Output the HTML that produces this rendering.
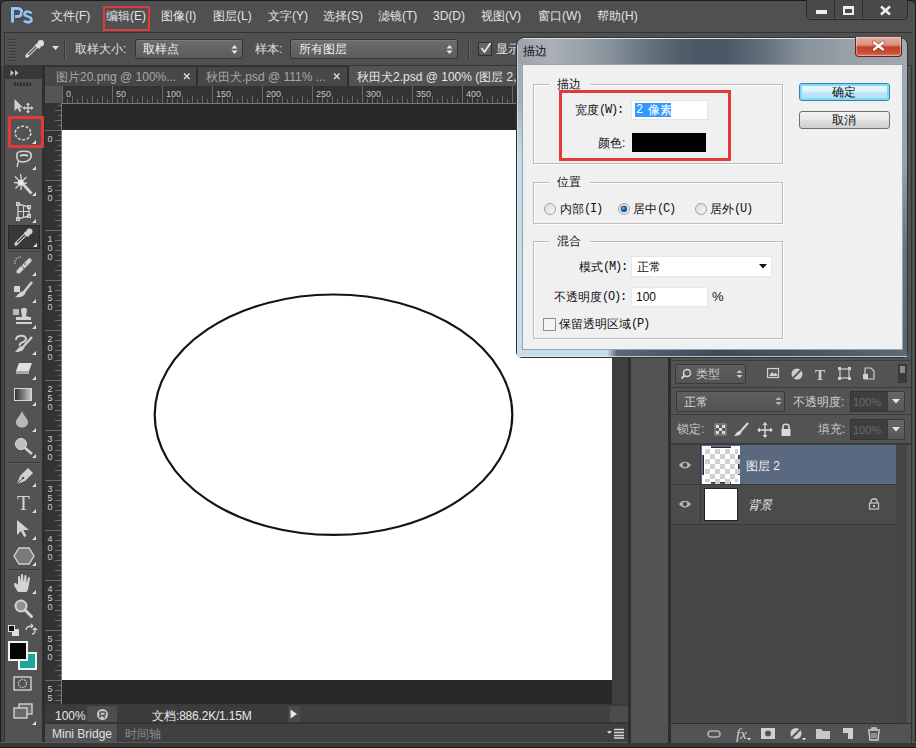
<!DOCTYPE html>
<html><head><meta charset="utf-8">
<style>
*{margin:0;padding:0;box-sizing:border-box}
html,body{width:916px;height:748px;overflow:hidden;background:#2b2b2b}
body{position:relative;font-family:"Liberation Sans",sans-serif;font-size:12px;color:#e0e0e0}
.a{position:absolute}
.t{position:absolute;white-space:nowrap;line-height:1}
.t i{display:inline-block;font-style:normal;text-align:center;overflow:hidden;vertical-align:top}
.t u{text-decoration:none;font-family:"Liberation Mono",monospace;font-size:12px;letter-spacing:-1.2px;vertical-align:top;line-height:12px}
svg{position:absolute;overflow:visible}
</style></head>
<body>

<div class="a" style="left:0px;top:0px;width:916px;height:748px;background:#505050;border:1px solid #1c1c1c;border-radius:6px 6px 0 0"></div>
<svg style="left:10px;top:6px" width="26" height="20"><path d="M2.5 16.5 V2.5 H8 C13 2.5 13 10.5 8 10.5 H5" fill="none" stroke="#2e4a68" stroke-width="5"/><path d="M2.5 16.5 V2.5 H8 C13 2.5 13 10.5 8 10.5 H5" fill="none" stroke="#9ec0e2" stroke-width="3.2"/><path d="M21.5 7.5 C20 5 14.5 5 14.5 8 C14.5 11 21.5 10 21.5 13.5 C21.5 17 15.5 17 14 14.5" fill="none" stroke="#2e4a68" stroke-width="4.6"/><path d="M21.5 7.5 C20 5 14.5 5 14.5 8 C14.5 11 21.5 10 21.5 13.5 C21.5 17 15.5 17 14 14.5" fill="none" stroke="#9ec0e2" stroke-width="2.8"/></svg>
<div class="t" style="left:51px;top:10px;font-size:12px;color:#e4e4e4;"><i style="width:12px">文</i><i style="width:12px">件</i>(F)</div>
<div class="t" style="left:106px;top:10px;font-size:12px;color:#e4e4e4;"><i style="width:12px">编</i><i style="width:12px">辑</i>(E)</div>
<div class="t" style="left:161px;top:10px;font-size:12px;color:#e4e4e4;"><i style="width:12px">图</i><i style="width:12px">像</i>(I)</div>
<div class="t" style="left:213px;top:10px;font-size:12px;color:#e4e4e4;"><i style="width:12px">图</i><i style="width:12px">层</i>(L)</div>
<div class="t" style="left:268px;top:10px;font-size:12px;color:#e4e4e4;"><i style="width:12px">文</i><i style="width:12px">字</i>(Y)</div>
<div class="t" style="left:323px;top:10px;font-size:12px;color:#e4e4e4;"><i style="width:12px">选</i><i style="width:12px">择</i>(S)</div>
<div class="t" style="left:378px;top:10px;font-size:12px;color:#e4e4e4;"><i style="width:12px">滤</i><i style="width:12px">镜</i>(T)</div>
<div class="t" style="left:433px;top:10px;font-size:12px;color:#e4e4e4;">3D(D)</div>
<div class="t" style="left:481px;top:10px;font-size:12px;color:#e4e4e4;"><i style="width:12px">视</i><i style="width:12px">图</i>(V)</div>
<div class="t" style="left:538px;top:10px;font-size:12px;color:#e4e4e4;"><i style="width:12px">窗</i><i style="width:12px">口</i>(W)</div>
<div class="t" style="left:597px;top:10px;font-size:12px;color:#e4e4e4;"><i style="width:12px">帮</i><i style="width:12px">助</i>(H)</div>
<div class="a" style="left:103px;top:6px;width:47px;height:25px;background:transparent;border:2px solid #e2393b"></div>
<div class="a" style="left:806px;top:0px;width:102px;height:20px;background:#4a4a4a;border:1px solid #2a2a2a;border-top:none;border-radius:0 0 5px 5px;box-shadow:inset 0 -1px 0 #555"></div>
<div class="a" style="left:834px;top:0px;width:1px;height:19px;background:#2e2e2e;"></div>
<div class="a" style="left:862px;top:0px;width:1px;height:19px;background:#2e2e2e;"></div>
<div class="a" style="left:816px;top:10px;width:11px;height:4px;background:#eeeeee;"></div>
<div class="a" style="left:843px;top:6px;width:11px;height:9px;background:transparent;border:2px solid #eeeeee;border-top-width:3px"></div>
<svg style="left:879px;top:5px" width="13" height="11"><path d="M2 1.5 L11 9.5 M11 1.5 L2 9.5" stroke="#f0f0f0" stroke-width="2.4"/></svg>
<div class="a" style="left:4px;top:32px;width:908px;height:1px;background:#333333;"></div>
<div class="a" style="left:4px;top:33px;width:908px;height:32px;background:#505050;"></div>
<div class="a" style="left:4px;top:65px;width:908px;height:1px;background:#363636;"></div>
<div class="a" style="left:9px;top:39px;width:7px;height:1px;background:#383838;"></div>
<div class="a" style="left:9px;top:40px;width:7px;height:1px;background:#5a5a5a;"></div>
<div class="a" style="left:9px;top:42px;width:7px;height:1px;background:#383838;"></div>
<div class="a" style="left:9px;top:43px;width:7px;height:1px;background:#5a5a5a;"></div>
<div class="a" style="left:9px;top:45px;width:7px;height:1px;background:#383838;"></div>
<div class="a" style="left:9px;top:46px;width:7px;height:1px;background:#5a5a5a;"></div>
<div class="a" style="left:9px;top:48px;width:7px;height:1px;background:#383838;"></div>
<div class="a" style="left:9px;top:49px;width:7px;height:1px;background:#5a5a5a;"></div>
<div class="a" style="left:9px;top:51px;width:7px;height:1px;background:#383838;"></div>
<div class="a" style="left:9px;top:52px;width:7px;height:1px;background:#5a5a5a;"></div>
<div class="a" style="left:9px;top:54px;width:7px;height:1px;background:#383838;"></div>
<div class="a" style="left:9px;top:55px;width:7px;height:1px;background:#5a5a5a;"></div>
<div class="a" style="left:9px;top:57px;width:7px;height:1px;background:#383838;"></div>
<div class="a" style="left:9px;top:58px;width:7px;height:1px;background:#5a5a5a;"></div>
<div class="a" style="left:9px;top:60px;width:7px;height:1px;background:#383838;"></div>
<div class="a" style="left:9px;top:61px;width:7px;height:1px;background:#5a5a5a;"></div>
<div class="a" style="left:4px;top:32px;width:1px;height:34px;background:#363636;"></div>
<svg style="left:24px;top:38px" width="22" height="21"><path d="M3 18 L13 8" stroke="#dcdcdc" stroke-width="3.4" stroke-linecap="round"/><path d="M4.3 16.7 L12.3 8.7" stroke="#505050" stroke-width="1.3"/><path d="M12 6 L16 10" stroke="#dcdcdc" stroke-width="3"/><circle cx="16.8" cy="5.2" r="3.2" fill="#dcdcdc"/></svg>
<svg style="left:52px;top:46px" width="8" height="5"><path d="M0 0 L7 0 L3.5 4 Z" fill="#e0e0e0"/></svg>
<div class="a" style="left:64px;top:38px;width:1px;height:22px;background:#3a3a3a;"></div>
<div class="a" style="left:65px;top:38px;width:1px;height:22px;background:#626262;"></div>
<div class="t" style="left:75px;top:43px;font-size:12px;color:#e0e0e0;"><i style="width:12px">取</i><i style="width:12px">样</i><i style="width:12px">大</i><i style="width:12px">小</i>:</div>
<div class="a" style="left:135px;top:39px;width:108px;height:20px;border:1px solid #343434;border-radius:3px;background:linear-gradient(180deg,#6c6c6c,#5c5c5c);box-shadow:inset 0 1px 0 #7a7a7a"></div>
<div class="t" style="left:143px;top:43px;font-size:12px;color:#f0f0f0;"><i style="width:12px">取</i><i style="width:12px">样</i><i style="width:12px">点</i></div>
<svg style="left:231px;top:44px" width="7" height="11"><path d="M0.5 4.5 L3.5 1 L6.5 4.5 Z M0.5 6.5 L3.5 10 L6.5 6.5 Z" fill="#e8e8e8"/></svg>
<div class="t" style="left:255px;top:43px;font-size:12px;color:#e0e0e0;"><i style="width:12px">样</i><i style="width:12px">本</i>:</div>
<div class="a" style="left:290px;top:39px;width:168px;height:20px;border:1px solid #343434;border-radius:3px;background:linear-gradient(180deg,#6c6c6c,#5c5c5c);box-shadow:inset 0 1px 0 #7a7a7a"></div>
<div class="t" style="left:299px;top:43px;font-size:12px;color:#f0f0f0;"><i style="width:12px">所</i><i style="width:12px">有</i><i style="width:12px">图</i><i style="width:12px">层</i></div>
<svg style="left:446px;top:44px" width="7" height="11"><path d="M0.5 4.5 L3.5 1 L6.5 4.5 Z M0.5 6.5 L3.5 10 L6.5 6.5 Z" fill="#e8e8e8"/></svg>
<div class="a" style="left:468px;top:38px;width:1px;height:22px;background:#3a3a3a;"></div>
<div class="a" style="left:469px;top:38px;width:1px;height:22px;background:#626262;"></div>
<div class="a" style="left:478px;top:42px;width:14px;height:14px;border:1px solid #2e2e2e;background:linear-gradient(180deg,#6a6a6a,#5a5a5a)"></div>
<svg style="left:479px;top:41px" width="14" height="14"><path d="M2.5 7 L5.5 11 L11.5 2" fill="none" stroke="#e8e8e8" stroke-width="1.8"/></svg>
<div class="t" style="left:496px;top:43px;font-size:12px;color:#e0e0e0;"><i style="width:12px">显</i><i style="width:12px">示</i><i style="width:12px">取</i><i style="width:12px">样</i><i style="width:12px">环</i></div>
<div class="a" style="left:45px;top:66px;width:583px;height:20px;background:#2f2f2f;"></div>
<div class="a" style="left:45px;top:67px;width:151px;height:19px;background:#474747;"></div>
<div class="t" style="left:56px;top:71px;font-size:12px;color:#a8a8a8;"><i style="width:12px">图</i><i style="width:12px">片</i>20.png @ 100%...</div>
<svg style="left:183px;top:73px" width="8" height="7"><path d="M1 0.5 L6.5 6 M6.5 0.5 L1 6" stroke="#e0e0e0" stroke-width="1.3"/></svg>
<div class="a" style="left:198px;top:67px;width:149px;height:19px;background:#474747;"></div>
<div class="t" style="left:206px;top:71px;font-size:12px;color:#a8a8a8;"><i style="width:12px">秋</i><i style="width:12px">田</i><i style="width:12px">犬</i>.psd @ 111% ...</div>
<svg style="left:333px;top:73px" width="8" height="7"><path d="M1 0.5 L6.5 6 M6.5 0.5 L1 6" stroke="#e0e0e0" stroke-width="1.3"/></svg>
<div class="a" style="left:349px;top:66px;width:279px;height:20px;background:#535353;"></div>
<div class="t" style="left:357px;top:71px;font-size:12px;color:#e6e6e6;"><i style="width:12px">秋</i><i style="width:12px">田</i><i style="width:12px">犬</i>2.psd @ 100% (<i style="width:12px">图</i><i style="width:12px">层</i> 2, RGB/8) *</div>
<div class="a" style="left:5px;top:66px;width:37px;height:13px;background:#383838;"></div>
<div class="a" style="left:5px;top:79px;width:37px;height:664px;background:#535353;"></div>
<div class="a" style="left:1px;top:66px;width:3px;height:677px;background:#444444;"></div>
<div class="a" style="left:4px;top:66px;width:1px;height:677px;background:#363636;"></div>
<div class="a" style="left:42px;top:66px;width:3px;height:677px;background:#2e2e2e;"></div>
<svg style="left:10px;top:70px" width="10" height="6"><path d="M0.5 0 L4 3 L0.5 6 Z M5 0 L8.5 3 L5 6 Z" fill="#c8c8c8"/></svg>
<div class="a" style="left:14px;top:83px;width:2px;height:3px;background:#2e2e2e;"></div>
<div class="a" style="left:17px;top:83px;width:2px;height:3px;background:#2e2e2e;"></div>
<div class="a" style="left:20px;top:83px;width:2px;height:3px;background:#2e2e2e;"></div>
<div class="a" style="left:23px;top:83px;width:2px;height:3px;background:#2e2e2e;"></div>
<div class="a" style="left:26px;top:83px;width:2px;height:3px;background:#2e2e2e;"></div>
<div class="a" style="left:29px;top:83px;width:2px;height:3px;background:#2e2e2e;"></div>
<div class="a" style="left:13px;top:82px;width:20px;height:1px;background:#464646;"></div>
<svg style="left:12px;top:96px" width="24" height="18"><path d="M2.5 3 L2.5 15 L5.5 12 L7.5 16 L9.5 15 L7.5 11.5 L11 11.5 Z" fill="#d2d2d2"/><path d="M16 7.5 L16 16.5 M11.5 12 L20.5 12" stroke="#d2d2d2" stroke-width="1.3"/><path d="M16 6.5 L14 9 L18 9Z M16 17.5 L14 15 L18 15Z M10.5 12 L13 10 L13 14Z M21.5 12 L19 10 L19 14Z" fill="#d2d2d2"/></svg>
<div class="a" style="left:8px;top:116px;width:36px;height:32px;background:transparent;border:3px solid #e2393b"></div>
<svg style="left:13px;top:124px" width="22" height="18"><ellipse cx="10" cy="9" rx="7.8" ry="6.8" fill="none" stroke="#d2d2d2" stroke-width="1.6" stroke-dasharray="3 1.6"/></svg>
<svg style="left:32px;top:140px" width="4" height="4"><path d="M4 0 L4 4 L0 4 Z" fill="#e0e0e0"/></svg>
<svg style="left:13px;top:148px" width="22" height="22"><path d="M4 6 C4 2.5 17 2 18 6 C19 10 16 14 9 14 C5 14 3 11 4 6 Z" fill="none" stroke="#d2d2d2" stroke-width="1.6"/><path d="M7 8 C9 6.5 13 6.5 15 8" stroke="#d2d2d2" stroke-width="2" fill="none"/><path d="M6 13 C4 15 5 17 4 19" stroke="#d2d2d2" stroke-width="1.4" fill="none"/></svg>
<svg style="left:32px;top:166px" width="4" height="4"><path d="M4 0 L4 4 L0 4 Z" fill="#e0e0e0"/></svg>
<svg style="left:10px;top:172px" width="26" height="26"><path d="M12 11 L21.5 21.5" stroke="#d2d2d2" stroke-width="2.8"/><path d="M10.5 2 L11.5 8 M4 10.5 L9.5 11 M5 4.5 L9 8.5 M16.5 5 L12.5 9 M5.5 16.5 L9 13 M17 11 L13 11.5 M11 18 L11.2 14" stroke="#d2d2d2" stroke-width="1.4"/><circle cx="10.7" cy="10.7" r="3" fill="#e8e8e8"/></svg>
<svg style="left:32px;top:192px" width="4" height="4"><path d="M4 0 L4 4 L0 4 Z" fill="#e0e0e0"/></svg>
<svg style="left:14px;top:201px" width="20" height="21"><path d="M4 3 L15 6 L15 15 L4 18 Z" fill="none" stroke="#d2d2d2" stroke-width="1.3"/><path d="M9.5 4.5 L9.5 16.5 M4 10.5 L15 10.5" stroke="#d2d2d2" stroke-width="1"/><rect x="2.5" y="1.5" width="3" height="3" fill="none" stroke="#d2d2d2"/><rect x="13.5" y="4.5" width="3" height="3" fill="none" stroke="#d2d2d2"/><rect x="13.5" y="13.5" width="3" height="3" fill="none" stroke="#d2d2d2"/><rect x="2.5" y="16.5" width="3" height="3" fill="none" stroke="#d2d2d2"/></svg>
<svg style="left:32px;top:219px" width="4" height="4"><path d="M4 0 L4 4 L0 4 Z" fill="#e0e0e0"/></svg>
<div class="a" style="left:8px;top:225px;width:32px;height:24px;background:#383838;border:1px solid #2a2a2a"></div>
<svg style="left:13px;top:227px" width="22" height="20"><path d="M3 17 L13 7" stroke="#d2d2d2" stroke-width="3.2" stroke-linecap="round"/><path d="M4.3 15.7 L12 8" stroke="#383838" stroke-width="1.2"/><path d="M12 5 L16 9" stroke="#d2d2d2" stroke-width="3"/><circle cx="16.5" cy="4.5" r="3" fill="#d2d2d2"/></svg>
<svg style="left:33px;top:243px" width="4" height="4"><path d="M4 0 L4 4 L0 4 Z" fill="#e0e0e0"/></svg>
<div class="a" style="left:8px;top:251px;width:32px;height:1px;background:#444444;"></div>
<svg style="left:12px;top:254px" width="24" height="22"><path d="M5 16 L16 5 C18 3 21 6 19 8 L8 19 C6 21 3 18 5 16 Z" fill="#d2d2d2" stroke="#888" stroke-width="0.6"/><path d="M3 10 C2 6 5 3 9 3" stroke="#d2d2d2" stroke-width="1.2" stroke-dasharray="1.2 1.2" fill="none"/><circle cx="10" cy="12" r="0.9" fill="#777"/><circle cx="13" cy="10" r="0.9" fill="#777"/><circle cx="11.5" cy="14" r="0.9" fill="#777"/></svg>
<svg style="left:32px;top:272px" width="4" height="4"><path d="M4 0 L4 4 L0 4 Z" fill="#e0e0e0"/></svg>
<svg style="left:12px;top:280px" width="24" height="20"><rect x="2" y="6" width="6" height="6" fill="#d2d2d2"/><path d="M20 2 L12 12" stroke="#d2d2d2" stroke-width="2.4"/><path d="M12 11 C8 11 6 15 3 17 C8 18 13 16 13.5 12.5 Z" fill="#d2d2d2"/></svg>
<svg style="left:32px;top:299px" width="4" height="4"><path d="M4 0 L4 4 L0 4 Z" fill="#e0e0e0"/></svg>
<svg style="left:12px;top:307px" width="24" height="22"><rect x="1" y="2" width="6" height="6" fill="#bbb"/><path d="M9 3 C9 0 15 0 15 3 L14 9 L17 10 L19 10 L19 13 L4 13 L4 10 L10 10 Z" fill="#d2d2d2"/><rect x="4" y="15" width="16" height="2" fill="#d2d2d2"/></svg>
<svg style="left:32px;top:325px" width="4" height="4"><path d="M4 0 L4 4 L0 4 Z" fill="#e0e0e0"/></svg>
<svg style="left:12px;top:333px" width="24" height="22"><path d="M4 7 C4 2 14 1 14 6 C14 10 6 9 8 13" fill="none" stroke="#d2d2d2" stroke-width="2"/><path d="M20 4 L11 14" stroke="#d2d2d2" stroke-width="2.2"/><path d="M11 13 C7 13 5 17 3 19 C9 19 12 17 12.5 14 Z" fill="#d2d2d2"/></svg>
<svg style="left:32px;top:351px" width="4" height="4"><path d="M4 0 L4 4 L0 4 Z" fill="#e0e0e0"/></svg>
<svg style="left:13px;top:361px" width="22" height="16"><path d="M6 2 L19 2 L16 10 L3 10 Z" fill="#e0e0e0"/><path d="M3 10 L16 10 L16 13 L3 13 Z" fill="#a8a8a8"/></svg>
<svg style="left:32px;top:376px" width="4" height="4"><path d="M4 0 L4 4 L0 4 Z" fill="#e0e0e0"/></svg>
<div class="a" style="left:14px;top:388px;width:18px;height:13px;border:1px solid #d8d8d8;background:linear-gradient(90deg,#303030,#c8c8c8)"></div>
<svg style="left:32px;top:402px" width="4" height="4"><path d="M4 0 L4 4 L0 4 Z" fill="#e0e0e0"/></svg>
<svg style="left:15px;top:410px" width="18" height="18"><path d="M7 1 C9 6 13 9 13 12 C13 16 10 17.5 7 17.5 C4 17.5 1 16 1 12 C1 9 5 6 7 1 Z" fill="#b8b8b8"/></svg>
<svg style="left:32px;top:428px" width="4" height="4"><path d="M4 0 L4 4 L0 4 Z" fill="#e0e0e0"/></svg>
<svg style="left:13px;top:437px" width="22" height="20"><circle cx="8" cy="7" r="5.5" fill="#c0c0c0" stroke="#ddd" stroke-width="1"/><path d="M11 10 L19 17" stroke="#d2d2d2" stroke-width="2.4"/></svg>
<svg style="left:32px;top:454px" width="4" height="4"><path d="M4 0 L4 4 L0 4 Z" fill="#e0e0e0"/></svg>
<div class="a" style="left:8px;top:462px;width:32px;height:1px;background:#3a3a3a;"></div>
<div class="a" style="left:8px;top:463px;width:32px;height:1px;background:#5a5a5a;"></div>
<svg style="left:13px;top:466px" width="22" height="22"><path d="M15 2 L20 7 L12 15 L4 18 L7 10 Z" fill="#d2d2d2"/><path d="M4 18 L9.5 12.5" stroke="#555" stroke-width="1"/><circle cx="10" cy="12" r="1.3" fill="#555"/></svg>
<svg style="left:32px;top:483px" width="4" height="4"><path d="M4 0 L4 4 L0 4 Z" fill="#e0e0e0"/></svg>
<svg style="left:13px;top:492px" width="22" height="22"><text x="10.5" y="18" text-anchor="middle" font-family="Liberation Serif" font-size="21" fill="#d2d2d2">T</text></svg>
<svg style="left:32px;top:509px" width="4" height="4"><path d="M4 0 L4 4 L0 4 Z" fill="#e0e0e0"/></svg>
<svg style="left:15px;top:519px" width="18" height="20"><path d="M2 1 L2 16 L6 12 L9 18 L11.5 17 L8.5 11 L14 11 Z" fill="#d2d2d2"/></svg>
<svg style="left:32px;top:536px" width="4" height="4"><path d="M4 0 L4 4 L0 4 Z" fill="#e0e0e0"/></svg>
<svg style="left:13px;top:546px" width="22" height="20"><path d="M5 1 L15 1 L20 9 L15 17 L5 17 L0 9 Z" fill="#7a7a7a" stroke="#d2d2d2" stroke-width="1.4" transform="translate(1,1)"/></svg>
<svg style="left:32px;top:562px" width="4" height="4"><path d="M4 0 L4 4 L0 4 Z" fill="#e0e0e0"/></svg>
<div class="a" style="left:8px;top:569px;width:32px;height:1px;background:#3a3a3a;"></div>
<div class="a" style="left:8px;top:570px;width:32px;height:1px;background:#5a5a5a;"></div>
<svg style="left:13px;top:573px" width="22" height="21"><path d="M5 19 C3 16 1 13 1 11 C1 9.5 3 9.5 4 11 L5 12 L5 4 C5 2.5 7 2.5 7 4 L7.5 9 L8 2 C8 0.5 10 0.5 10 2 L10.5 9 L11.5 3 C11.5 1.5 13.5 1.5 13.5 3 L13.5 10 L15 5 C15.5 3.5 17.2 4 17 5.5 L15.5 14 C15 17 14 19 13 19 Z" fill="#d2d2d2"/></svg>
<svg style="left:32px;top:590px" width="4" height="4"><path d="M4 0 L4 4 L0 4 Z" fill="#e0e0e0"/></svg>
<svg style="left:13px;top:598px" width="22" height="22"><circle cx="8" cy="8" r="5.5" fill="#909090" stroke="#d2d2d2" stroke-width="2"/><path d="M12 12 L18.5 18.5" stroke="#d2d2d2" stroke-width="3" stroke-linecap="round"/></svg>
<svg style="left:8px;top:625px" width="12" height="12"><rect x="0.5" y="0.5" width="6" height="6" fill="#111" stroke="#ddd" stroke-width="1"/><rect x="4.5" y="4.5" width="6" height="6" fill="#ddd" stroke="#ddd"/><rect x="0.5" y="0.5" width="6" height="6" fill="#111" stroke="#ddd" stroke-width="1"/></svg>
<svg style="left:24px;top:624px" width="14" height="13"><path d="M2 6 C2 2 6 2 9 2 M9 2 L7 0 M9 2 L7 4 M11 4 C11 8 11 10 8 10 M11 4 L9 6 M11 4 L13 6" stroke="#d2d2d2" stroke-width="1.3" fill="none"/></svg>
<div class="a" style="left:18px;top:652px;width:19px;height:18px;background:#1aa89a;border:2px solid #f2f2f2"></div>
<div class="a" style="left:8px;top:641px;width:20px;height:20px;background:#050505;border:2px solid #f2f2f2"></div>
<svg style="left:13px;top:676px" width="20" height="17"><rect x="1" y="1" width="17" height="13" fill="none" stroke="#d2d2d2" stroke-width="1.4"/><circle cx="9.5" cy="7.5" r="4" fill="none" stroke="#d2d2d2" stroke-width="1.2" stroke-dasharray="1.5 1"/></svg>
<svg style="left:13px;top:703px" width="22" height="20"><rect x="6" y="1" width="13" height="10" fill="#6a6a6a" stroke="#d2d2d2" stroke-width="1.4"/><rect x="1" y="5" width="13" height="10" fill="#6a6a6a" stroke="#d2d2d2" stroke-width="1.4"/></svg>
<svg style="left:32px;top:721px" width="4" height="4"><path d="M4 0 L4 4 L0 4 Z" fill="#e0e0e0"/></svg>
<div class="a" style="left:45px;top:86px;width:583px;height:17px;background:#333333;"></div>
<div class="a" style="left:45px;top:86px;width:17px;height:17px;background:#555555;"></div>
<div class="a" style="left:45px;top:103px;width:17px;height:601px;background:#333333;"></div>
<div class="a" style="left:62px;top:103px;width:550px;height:603px;background:#282828;"></div>
<div class="a" style="left:612px;top:103px;width:16px;height:601px;background:#3f3f3f;"></div>
<svg style="left:0;top:0" width="916" height="748"><path d="M62.5 86 V103 M67.5 99 V103 M72.5 96 V103 M77.5 99 V103 M82.5 96 V103 M87.5 99 V103 M92.5 96 V103 M97.5 99 V103 M102.5 96 V103 M107.5 99 V103 M112.5 86 V103 M117.5 99 V103 M122.5 96 V103 M127.5 99 V103 M132.5 96 V103 M137.5 99 V103 M142.5 96 V103 M147.5 99 V103 M152.5 96 V103 M157.5 99 V103 M162.5 86 V103 M167.5 99 V103 M172.5 96 V103 M177.5 99 V103 M182.5 96 V103 M187.5 99 V103 M192.5 96 V103 M197.5 99 V103 M202.5 96 V103 M207.5 99 V103 M212.5 86 V103 M217.5 99 V103 M222.5 96 V103 M227.5 99 V103 M232.5 96 V103 M237.5 99 V103 M242.5 96 V103 M247.5 99 V103 M252.5 96 V103 M257.5 99 V103 M262.5 86 V103 M267.5 99 V103 M272.5 96 V103 M277.5 99 V103 M282.5 96 V103 M287.5 99 V103 M292.5 96 V103 M297.5 99 V103 M302.5 96 V103 M307.5 99 V103 M312.5 86 V103 M317.5 99 V103 M322.5 96 V103 M327.5 99 V103 M332.5 96 V103 M337.5 99 V103 M342.5 96 V103 M347.5 99 V103 M352.5 96 V103 M357.5 99 V103 M362.5 86 V103 M367.5 99 V103 M372.5 96 V103 M377.5 99 V103 M382.5 96 V103 M387.5 99 V103 M392.5 96 V103 M397.5 99 V103 M402.5 96 V103 M407.5 99 V103 M412.5 86 V103 M417.5 99 V103 M422.5 96 V103 M427.5 99 V103 M432.5 96 V103 M437.5 99 V103 M442.5 96 V103 M447.5 99 V103 M452.5 96 V103 M457.5 99 V103 M462.5 86 V103 M467.5 99 V103 M472.5 96 V103 M477.5 99 V103 M482.5 96 V103 M487.5 99 V103 M492.5 96 V103 M497.5 99 V103 M502.5 96 V103 M507.5 99 V103 M512.5 86 V103 M517.5 99 V103 M522.5 96 V103 M527.5 99 V103 M532.5 96 V103 M537.5 99 V103 M542.5 96 V103 M547.5 99 V103 M552.5 96 V103 M557.5 99 V103 M562.5 86 V103 M567.5 99 V103 M572.5 96 V103 M577.5 99 V103 M582.5 96 V103 M587.5 99 V103 M592.5 96 V103 M597.5 99 V103 M602.5 96 V103 M607.5 99 V103 M612.5 86 V103 M617.5 99 V103 M622.5 96 V103" stroke="#6a6a6a" stroke-width="1"/><path d="M62 103.5 H628" stroke="#7a7a7a" stroke-width="1"/><text x="66.0" y="97" font-size="9" fill="#c4c4c4" font-family="Liberation Sans">0</text><text x="116.0" y="97" font-size="9" fill="#c4c4c4" font-family="Liberation Sans">50</text><text x="166.0" y="97" font-size="9" fill="#c4c4c4" font-family="Liberation Sans">100</text><text x="216.0" y="97" font-size="9" fill="#c4c4c4" font-family="Liberation Sans">150</text><text x="266.0" y="97" font-size="9" fill="#c4c4c4" font-family="Liberation Sans">200</text><text x="316.0" y="97" font-size="9" fill="#c4c4c4" font-family="Liberation Sans">250</text><text x="366.0" y="97" font-size="9" fill="#c4c4c4" font-family="Liberation Sans">300</text><text x="416.0" y="97" font-size="9" fill="#c4c4c4" font-family="Liberation Sans">350</text><text x="466.0" y="97" font-size="9" fill="#c4c4c4" font-family="Liberation Sans">400</text><text x="516.0" y="97" font-size="9" fill="#c4c4c4" font-family="Liberation Sans">450</text></svg>
<svg style="left:0;top:0" width="916" height="748"><path d="M58 105.5 H62 M55 110.5 H62 M58 115.5 H62 M55 120.5 H62 M58 125.5 H62 M45 130.5 H62 M58 135.5 H62 M55 140.5 H62 M58 145.5 H62 M55 150.5 H62 M58 155.5 H62 M55 160.5 H62 M58 165.5 H62 M55 170.5 H62 M58 175.5 H62 M45 180.5 H62 M58 185.5 H62 M55 190.5 H62 M58 195.5 H62 M55 200.5 H62 M58 205.5 H62 M55 210.5 H62 M58 215.5 H62 M55 220.5 H62 M58 225.5 H62 M45 230.5 H62 M58 235.5 H62 M55 240.5 H62 M58 245.5 H62 M55 250.5 H62 M58 255.5 H62 M55 260.5 H62 M58 265.5 H62 M55 270.5 H62 M58 275.5 H62 M45 280.5 H62 M58 285.5 H62 M55 290.5 H62 M58 295.5 H62 M55 300.5 H62 M58 305.5 H62 M55 310.5 H62 M58 315.5 H62 M55 320.5 H62 M58 325.5 H62 M45 330.5 H62 M58 335.5 H62 M55 340.5 H62 M58 345.5 H62 M55 350.5 H62 M58 355.5 H62 M55 360.5 H62 M58 365.5 H62 M55 370.5 H62 M58 375.5 H62 M45 380.5 H62 M58 385.5 H62 M55 390.5 H62 M58 395.5 H62 M55 400.5 H62 M58 405.5 H62 M55 410.5 H62 M58 415.5 H62 M55 420.5 H62 M58 425.5 H62 M45 430.5 H62 M58 435.5 H62 M55 440.5 H62 M58 445.5 H62 M55 450.5 H62 M58 455.5 H62 M55 460.5 H62 M58 465.5 H62 M55 470.5 H62 M58 475.5 H62 M45 480.5 H62 M58 485.5 H62 M55 490.5 H62 M58 495.5 H62 M55 500.5 H62 M58 505.5 H62 M55 510.5 H62 M58 515.5 H62 M55 520.5 H62 M58 525.5 H62 M45 530.5 H62 M58 535.5 H62 M55 540.5 H62 M58 545.5 H62 M55 550.5 H62 M58 555.5 H62 M55 560.5 H62 M58 565.5 H62 M55 570.5 H62 M58 575.5 H62 M45 580.5 H62 M58 585.5 H62 M55 590.5 H62 M58 595.5 H62 M55 600.5 H62 M58 605.5 H62 M55 610.5 H62 M58 615.5 H62 M55 620.5 H62 M58 625.5 H62 M45 630.5 H62 M58 635.5 H62 M55 640.5 H62 M58 645.5 H62 M55 650.5 H62 M58 655.5 H62 M55 660.5 H62 M58 665.5 H62 M55 670.5 H62 M58 675.5 H62 M45 680.5 H62 M58 685.5 H62 M55 690.5 H62 M58 695.5 H62 M55 700.5 H62" stroke="#6a6a6a" stroke-width="1"/><path d="M61.5 103 V704" stroke="#7a7a7a" stroke-width="1"/><text x="47.5" y="141.5" font-size="9" fill="#cfcfcf" font-family="Liberation Sans">0</text><text x="47.5" y="191.5" font-size="9" fill="#cfcfcf" font-family="Liberation Sans">5</text><text x="47.5" y="200.5" font-size="9" fill="#cfcfcf" font-family="Liberation Sans">0</text><text x="47.5" y="241.5" font-size="9" fill="#cfcfcf" font-family="Liberation Sans">1</text><text x="47.5" y="250.5" font-size="9" fill="#cfcfcf" font-family="Liberation Sans">0</text><text x="47.5" y="259.5" font-size="9" fill="#cfcfcf" font-family="Liberation Sans">0</text><text x="47.5" y="291.5" font-size="9" fill="#cfcfcf" font-family="Liberation Sans">1</text><text x="47.5" y="300.5" font-size="9" fill="#cfcfcf" font-family="Liberation Sans">5</text><text x="47.5" y="309.5" font-size="9" fill="#cfcfcf" font-family="Liberation Sans">0</text><text x="47.5" y="341.5" font-size="9" fill="#cfcfcf" font-family="Liberation Sans">2</text><text x="47.5" y="350.5" font-size="9" fill="#cfcfcf" font-family="Liberation Sans">0</text><text x="47.5" y="359.5" font-size="9" fill="#cfcfcf" font-family="Liberation Sans">0</text><text x="47.5" y="391.5" font-size="9" fill="#cfcfcf" font-family="Liberation Sans">2</text><text x="47.5" y="400.5" font-size="9" fill="#cfcfcf" font-family="Liberation Sans">5</text><text x="47.5" y="409.5" font-size="9" fill="#cfcfcf" font-family="Liberation Sans">0</text><text x="47.5" y="441.5" font-size="9" fill="#cfcfcf" font-family="Liberation Sans">3</text><text x="47.5" y="450.5" font-size="9" fill="#cfcfcf" font-family="Liberation Sans">0</text><text x="47.5" y="459.5" font-size="9" fill="#cfcfcf" font-family="Liberation Sans">0</text><text x="47.5" y="491.5" font-size="9" fill="#cfcfcf" font-family="Liberation Sans">3</text><text x="47.5" y="500.5" font-size="9" fill="#cfcfcf" font-family="Liberation Sans">5</text><text x="47.5" y="509.5" font-size="9" fill="#cfcfcf" font-family="Liberation Sans">0</text><text x="47.5" y="541.5" font-size="9" fill="#cfcfcf" font-family="Liberation Sans">4</text><text x="47.5" y="550.5" font-size="9" fill="#cfcfcf" font-family="Liberation Sans">0</text><text x="47.5" y="559.5" font-size="9" fill="#cfcfcf" font-family="Liberation Sans">0</text><text x="47.5" y="591.5" font-size="9" fill="#cfcfcf" font-family="Liberation Sans">4</text><text x="47.5" y="600.5" font-size="9" fill="#cfcfcf" font-family="Liberation Sans">5</text><text x="47.5" y="609.5" font-size="9" fill="#cfcfcf" font-family="Liberation Sans">0</text><text x="47.5" y="641.5" font-size="9" fill="#cfcfcf" font-family="Liberation Sans">5</text><text x="47.5" y="650.5" font-size="9" fill="#cfcfcf" font-family="Liberation Sans">0</text><text x="47.5" y="659.5" font-size="9" fill="#cfcfcf" font-family="Liberation Sans">0</text><text x="47.5" y="691.5" font-size="9" fill="#cfcfcf" font-family="Liberation Sans">5</text><text x="47.5" y="700.5" font-size="9" fill="#cfcfcf" font-family="Liberation Sans">5</text></svg>
<div class="a" style="left:62px;top:130px;width:550px;height:550px;background:#ffffff;"></div>
<svg style="left:0;top:0" width="916" height="748"><ellipse cx="333.5" cy="414.7" rx="178.8" ry="120.2" fill="none" stroke="#141414" stroke-width="2.2"/></svg>
<div class="a" style="left:45px;top:704px;width:583px;height:2px;background:#3a3a3a;"></div>
<div class="a" style="left:45px;top:706px;width:583px;height:16px;background:#414141;"></div>
<div class="a" style="left:45px;top:706px;width:42px;height:16px;background:#3c3c3c;"></div>
<div class="a" style="left:117px;top:706px;width:171px;height:16px;background:#3c3c3c;"></div>
<div class="a" style="left:610px;top:706px;width:18px;height:16px;background:#4c4c4c;"></div>
<div class="a" style="left:45px;top:722px;width:583px;height:2px;background:#343434;"></div>
<div class="a" style="left:45px;top:724px;width:583px;height:18px;background:#404040;"></div>
<div class="t" style="left:55px;top:710px;font-size:12px;color:#e8e8e8;">100%</div>
<div class="a" style="left:87px;top:706px;width:30px;height:16px;background:#4e4e4e;"></div>
<svg style="left:96px;top:708px" width="13" height="13"><circle cx="6.5" cy="6.5" r="5.5" fill="#c8c8c8"/><path d="M4 4 L4 10 M4 4 L8 4 C10 4 10 7.5 8 7.5 L4 7.5 M7 7.5 L9 10" stroke="#505050" stroke-width="1.4" fill="none"/></svg>
<div class="t" style="left:152px;top:710px;font-size:12px;color:#e8e8e8;letter-spacing:-0.2px"><i style="width:12px">文</i><i style="width:12px">档</i>:886.2K/1.15M</div>
<div class="a" style="left:288px;top:706px;width:12px;height:16px;background:#4a4a4a;"></div>
<svg style="left:290px;top:709px" width="8" height="10"><path d="M0.5 0.5 L7 5 L0.5 9.5 Z" fill="#e8e8e8"/></svg>
<div class="a" style="left:45px;top:724px;width:72px;height:18px;background:#535353;"></div>
<div class="t" style="left:52px;top:728px;font-size:12px;color:#e0e0e0;">Mini Bridge</div>
<div class="a" style="left:117px;top:724px;width:1px;height:18px;background:#383838;"></div>
<div class="t" style="left:125px;top:728px;font-size:12px;color:#8a8a8a;"><i style="width:12px">时</i><i style="width:12px">间</i><i style="width:12px">轴</i></div>
<svg style="left:606px;top:727px" width="20" height="12"><path d="M1 4 L6 4 L3.5 7 Z" fill="#d8d8d8"/><path d="M8 2.5 H18 M8 5.5 H18 M8 8.5 H18 M8 11 H18" stroke="#d8d8d8" stroke-width="1.3"/></svg>
<div class="a" style="left:0px;top:742px;width:916px;height:1px;background:#5a5a5a;"></div>
<div class="a" style="left:0px;top:743px;width:916px;height:5px;background:#383838;"></div>
<div class="a" style="left:0px;top:747px;width:916px;height:1px;background:#1c1c1c;"></div>
<div class="a" style="left:628px;top:66px;width:3px;height:677px;background:#2e2e2e;"></div>
<div class="a" style="left:631px;top:66px;width:37px;height:677px;background:#535353;"></div>
<div class="a" style="left:668px;top:66px;width:3px;height:677px;background:#2e2e2e;"></div>
<div class="a" style="left:671px;top:66px;width:240px;height:677px;background:#535353;"></div>
<div class="a" style="left:911px;top:66px;width:1px;height:677px;background:#333333;"></div>
<div class="a" style="left:671px;top:445px;width:225px;height:279px;background:#484848;"></div>
<div class="a" style="left:671px;top:360px;width:240px;height:1px;background:#3c3c3c;"></div>
<div class="a" style="left:675px;top:364px;width:71px;height:20px;border:1px solid #3a3a3a;border-radius:2px;background:linear-gradient(180deg,#5e5e5e,#545454)"></div>
<svg style="left:680px;top:368px" width="12" height="12"><circle cx="7" cy="5" r="3.5" fill="none" stroke="#d8d8d8" stroke-width="1.5"/><path d="M4.5 7.5 L1.5 10.5" stroke="#d8d8d8" stroke-width="1.8"/></svg>
<div class="t" style="left:696px;top:368px;font-size:12px;color:#d0d0d0;"><i style="width:12px">类</i><i style="width:12px">型</i></div>
<svg style="left:736px;top:369px" width="7" height="10"><path d="M0.5 4 L3.5 1 L6.5 4 Z M0.5 6 L3.5 9 L6.5 6 Z" fill="#c8c8c8"/></svg>
<svg style="left:766px;top:366px" width="115" height="16"><rect x="1.5" y="2.5" width="11" height="9" fill="#5a5a5a" stroke="#d0d0d0" stroke-width="1.2"/><path d="M3 10 L6 6 L8 8 L10 6.5 L11.5 10 Z" fill="#d0d0d0"/><circle cx="31" cy="8" r="5.5" fill="#d0d0d0"/><path d="M27 12 L35 4" stroke="#5a5a5a" stroke-width="2"/><text x="49" y="13.5" font-family="Liberation Serif" font-weight="bold" font-size="15" fill="#d0d0d0">T</text><rect x="74" y="3" width="9" height="9" fill="none" stroke="#d0d0d0" stroke-width="1.2"/><rect x="72" y="1" width="3" height="3" fill="#d0d0d0"/><rect x="82" y="1" width="3" height="3" fill="#d0d0d0"/><rect x="72" y="11" width="3" height="3" fill="#d0d0d0"/><rect x="82" y="11" width="3" height="3" fill="#d0d0d0"/><path d="M99 2 L105 2 L108 5 L108 13 L99 13 Z" fill="none" stroke="#d0d0d0" stroke-width="1.2"/><rect x="97" y="8" width="5" height="5" fill="#d0d0d0"/></svg>
<div class="a" style="left:898px;top:364px;width:9px;height:19px;background:#3a3a3a;"></div>
<div class="a" style="left:900px;top:366px;width:5px;height:7px;background:#8a8a8a;"></div>
<div class="a" style="left:671px;top:387px;width:240px;height:1px;background:#3c3c3c;"></div>
<div class="a" style="left:676px;top:391px;width:109px;height:21px;border:1px solid #3a3a3a;border-radius:2px;background:linear-gradient(180deg,#5e5e5e,#545454)"></div>
<div class="t" style="left:684px;top:396px;font-size:12px;color:#d8d8d8;"><i style="width:12px">正</i><i style="width:12px">常</i></div>
<svg style="left:775px;top:396px" width="7" height="10"><path d="M0.5 4 L3.5 1 L6.5 4 Z M0.5 6 L3.5 9 L6.5 6 Z" fill="#b8b8b8"/></svg>
<div class="t" style="left:793px;top:396px;font-size:12px;color:#d0d0d0;"><i style="width:12px">不</i><i style="width:12px">透</i><i style="width:12px">明</i><i style="width:12px">度</i>:</div>
<div class="a" style="left:850px;top:391px;width:38px;height:21px;background:#3e3e3e;border:1px solid #333"></div>
<div class="t" style="left:853px;top:397px;font-size:11px;color:#6a6a6a;">100%</div>
<div class="a" style="left:887px;top:391px;width:18px;height:21px;border:1px solid #3a3a3a;border-radius:0 2px 2px 0;background:linear-gradient(180deg,#666,#585858)"></div>
<svg style="left:892px;top:399px" width="8" height="5"><path d="M0 0 L8 0 L4 4.5 Z" fill="#e8e8e8"/></svg>
<div class="a" style="left:671px;top:414px;width:240px;height:1px;background:#3c3c3c;"></div>
<div class="t" style="left:677px;top:423px;font-size:12px;color:#c8c8c8;"><i style="width:12px">锁</i><i style="width:12px">定</i>:</div>
<svg style="left:714px;top:422px" width="80" height="16"><rect x="1" y="2" width="11" height="11" fill="#5a5a5a" stroke="#aaa" stroke-width="0.8"/><rect x="2" y="3" width="3" height="3" fill="#ddd"/><rect x="8" y="3" width="3" height="3" fill="#ddd"/><rect x="5" y="6" width="3" height="3" fill="#ddd"/><rect x="2" y="9" width="3" height="3" fill="#ddd"/><rect x="8" y="9" width="3" height="3" fill="#ddd"/><path d="M34 1 L26 10" stroke="#d8d8d8" stroke-width="2"/><path d="M26 9 C23 9 22 12 20 14 C24 14 27 13 27.5 10.5 Z" fill="#d8d8d8"/><path d="M51 1 V15 M44 8 H58" stroke="#d8d8d8" stroke-width="1.4"/><path d="M51 0 L48.5 3 L53.5 3 Z M51 16 L48.5 13 L53.5 13 Z M43 8 L46 5.5 L46 10.5 Z M59 8 L56 5.5 L56 10.5 Z" fill="#d8d8d8"/><path d="M69 7 V4.5 C69 1.5 75 1.5 75 4.5 V7" fill="none" stroke="#d8d8d8" stroke-width="1.6"/><rect x="67.5" y="7" width="9" height="7" fill="#d8d8d8"/></svg>
<div class="t" style="left:818px;top:423px;font-size:12px;color:#c8c8c8;"><i style="width:12px">填</i><i style="width:12px">充</i>:</div>
<div class="a" style="left:850px;top:419px;width:38px;height:21px;background:#3e3e3e;border:1px solid #333"></div>
<div class="t" style="left:853px;top:425px;font-size:11px;color:#6a6a6a;">100%</div>
<div class="a" style="left:887px;top:419px;width:18px;height:21px;border:1px solid #3a3a3a;border-radius:0 2px 2px 0;background:linear-gradient(180deg,#666,#585858)"></div>
<svg style="left:892px;top:427px" width="8" height="5"><path d="M0 0 L8 0 L4 4.5 Z" fill="#e8e8e8"/></svg>
<div class="a" style="left:671px;top:443px;width:240px;height:2px;background:#3a3a3a;"></div>
<div class="a" style="left:671px;top:445px;width:29px;height:40px;background:#4c4c4c;"></div>
<div class="a" style="left:700px;top:445px;width:196px;height:40px;background:#5a6880;"></div>
<div class="a" style="left:700px;top:445px;width:1px;height:40px;background:#3c3c3c;"></div>
<div class="a" style="left:671px;top:484px;width:225px;height:1px;background:#3a3a3a;"></div>
<svg style="left:703px;top:447px" width="36" height="36"><rect x="0.5" y="0.5" width="35" height="35" fill="#ffffff" stroke="#2a2a2a" stroke-width="1"/><rect x="2" y="2" width="32" height="32" fill="#fff"/><rect x="2" y="2" width="5" height="5" fill="#d0d0d0"/><rect x="2" y="12" width="5" height="5" fill="#d0d0d0"/><rect x="2" y="22" width="5" height="5" fill="#d0d0d0"/><rect x="2" y="32" width="5" height="5" fill="#d0d0d0"/><rect x="7" y="7" width="5" height="5" fill="#d0d0d0"/><rect x="7" y="17" width="5" height="5" fill="#d0d0d0"/><rect x="7" y="27" width="5" height="5" fill="#d0d0d0"/><rect x="12" y="2" width="5" height="5" fill="#d0d0d0"/><rect x="12" y="12" width="5" height="5" fill="#d0d0d0"/><rect x="12" y="22" width="5" height="5" fill="#d0d0d0"/><rect x="12" y="32" width="5" height="5" fill="#d0d0d0"/><rect x="17" y="7" width="5" height="5" fill="#d0d0d0"/><rect x="17" y="17" width="5" height="5" fill="#d0d0d0"/><rect x="17" y="27" width="5" height="5" fill="#d0d0d0"/><rect x="22" y="2" width="5" height="5" fill="#d0d0d0"/><rect x="22" y="12" width="5" height="5" fill="#d0d0d0"/><rect x="22" y="22" width="5" height="5" fill="#d0d0d0"/><rect x="22" y="32" width="5" height="5" fill="#d0d0d0"/><rect x="27" y="7" width="5" height="5" fill="#d0d0d0"/><rect x="27" y="17" width="5" height="5" fill="#d0d0d0"/><rect x="27" y="27" width="5" height="5" fill="#d0d0d0"/><rect x="32" y="2" width="5" height="5" fill="#d0d0d0"/><rect x="32" y="12" width="5" height="5" fill="#d0d0d0"/><rect x="32" y="22" width="5" height="5" fill="#d0d0d0"/><rect x="32" y="32" width="5" height="5" fill="#d0d0d0"/></svg>
<svg style="left:702px;top:446px" width="38" height="38"><path d="M1 9 V1 H9 M29 1 H37 V9 M37 29 V37 H29 M9 37 H1 V29" fill="none" stroke="#ffffff" stroke-width="2"/></svg>
<div class="t" style="left:746px;top:460px;font-size:12px;color:#f0f0f0;"><i style="width:12px">图</i><i style="width:12px">层</i> 2</div>
<div class="a" style="left:671px;top:485px;width:29px;height:39px;background:#4c4c4c;"></div>
<div class="a" style="left:700px;top:485px;width:196px;height:39px;background:#4b4b4b;"></div>
<div class="a" style="left:700px;top:485px;width:1px;height:39px;background:#3c3c3c;"></div>
<div class="a" style="left:704px;top:488px;width:34px;height:33px;background:#ffffff;border:1px solid #222"></div>
<div class="t" style="left:749px;top:499px;font-size:12px;color:#e8e8e8;font-style:italic;transform:skewX(-14deg)"><i style="width:12px">背</i><i style="width:12px">景</i></div>
<svg style="left:868px;top:497px" width="12" height="13"><path d="M3 6 V4 C3 1 9 1 9 4 V6" fill="none" stroke="#c8c8c8" stroke-width="1.3"/><rect x="1.5" y="6" width="9" height="6" fill="none" stroke="#c8c8c8" stroke-width="1.2"/><rect x="5" y="8" width="2" height="2" fill="#c8c8c8"/></svg>
<div class="a" style="left:671px;top:524px;width:225px;height:1px;background:#3a3a3a;"></div>
<svg style="left:678px;top:460px" width="14" height="10"><path d="M1 5 C4 0.5 10 0.5 13 5 C10 9.5 4 9.5 1 5 Z" fill="#b8b8b8"/><circle cx="7" cy="5" r="2.3" fill="#4a4a4a"/></svg>
<svg style="left:678px;top:499px" width="14" height="10"><path d="M1 5 C4 0.5 10 0.5 13 5 C10 9.5 4 9.5 1 5 Z" fill="#b8b8b8"/><circle cx="7" cy="5" r="2.3" fill="#4a4a4a"/></svg>
<div class="a" style="left:896px;top:445px;width:11px;height:279px;background:#454545;"></div>
<div class="a" style="left:671px;top:723px;width:241px;height:1px;background:#2e2e2e;"></div>
<div class="a" style="left:671px;top:724px;width:240px;height:19px;background:#535353;"></div>
<svg style="left:700px;top:724px" width="190" height="19"><rect x="8" y="7" width="12" height="6" rx="3" fill="none" stroke="#b0b0b0" stroke-width="1.5"/><text x="36" y="15" font-family="Liberation Serif" font-style="italic" font-size="15" fill="#d0d0d0">fx</text><rect x="61" y="4" width="14" height="11" fill="#d0d0d0"/><circle cx="68" cy="9.5" r="3" fill="#555"/><circle cx="96" cy="9.5" r="5.5" fill="#d0d0d0"/><path d="M92 13.5 L100 5.5" stroke="#555" stroke-width="2"/><path d="M116 5 L121 5 L123 7 L130 7 L130 15 L116 15 Z" fill="#c8c8c8"/><path d="M143 4 L153 4 L153 15 L143 15 Z" fill="#d0d0d0"/><path d="M143 9 L148 9 L148 15 L143 15 Z" fill="#555"/><path d="M168 6 L180 6 M172 6 V4 H176 V6 M169 7 L170 16 H178 L179 7" fill="none" stroke="#d0d0d0" stroke-width="1.4"/><path d="M172 9 V14 M174 9 V14 M176 9 V14" stroke="#d0d0d0" stroke-width="1"/><path d="M47 14 L51 14 L49 16.5 Z M102 14 L106 14 L104 16.5 Z" fill="#e0e0e0"/></svg>
<div class="a" style="left:516px;top:37px;width:392px;height:321px;border-radius:8px 8px 6px 6px;border:1px solid #2c343c;overflow:hidden;background:linear-gradient(90deg,#9ca4ac 0px,#aab0b6 35px,#8e98a0 84px,#6c7884 124px,#52606c 160px,#4a5664 185px,#4c5866 210px,#66727e 250px,#8a949c 290px,#98a0a8 330px,#a2aab0 392px)"></div>
<div class="a" style="left:523px;top:38px;width:378px;height:1px;background:#dde3ea;"></div>
<div class="a" style="left:517px;top:64px;width:5px;height:286px;background:linear-gradient(180deg,#a0a8b0 0px,#a8b2bc 40px,#b8cad8 66px,#c6dae8 90px,#c8dcea 286px)"></div>
<div class="a" style="left:517px;top:45px;width:1px;height:306px;background:#e4eaf0;opacity:.6"></div>
<div class="a" style="left:903px;top:64px;width:4px;height:286px;background:linear-gradient(180deg,#a4acb2 0px,#98a0a8 100px,#6a747e 180px,#5a6470 286px)"></div>
<div class="a" style="left:517px;top:350px;width:390px;height:7px;background:linear-gradient(90deg,#c8dcea 0px,#c8dcea 90px,#5a6878 100px,#3e4a58 200px,#4a5664 300px,#5e6a76 390px)"></div>
<div class="a" style="left:517px;top:356px;width:390px;height:1px;background:#e8eef4;opacity:.7"></div>
<div class="a" style="left:855px;top:37px;width:47px;height:20px;border:1px solid #5a2a22;border-top:none;border-radius:0 0 4px 4px;background:linear-gradient(180deg,#e4b0a4 0px,#d8907e 8px,#c8402a 10px,#c84a30 15px,#dc8068 20px);box-shadow:inset 0 0 0 1px rgba(255,230,220,.45)"></div>
<svg style="left:871px;top:40px" width="16" height="14"><path d="M3 2.5 L12 9.5 M12 2.5 L3 9.5" stroke="#6a3024" stroke-width="3.8" stroke-linecap="round" opacity=".6"/><path d="M3 2.5 L12 9.5 M12 2.5 L3 9.5" stroke="#ffffff" stroke-width="2.3" stroke-linecap="round"/></svg>
<div class="t" style="left:523px;top:45px;font-size:12px;color:#101010;"><i style="width:12px">描</i><i style="width:12px">边</i></div>
<div class="a" style="left:522px;top:64px;width:381px;height:286px;background:#f0f0f0;border:1px solid #98a4b0"></div>
<div class="a" style="left:533px;top:84px;width:250px;height:80px;background:transparent;border:1px solid #bcbcbc;box-shadow:inset 1px 1px 0 #ffffff,1px 1px 0 #ffffff"></div>
<div class="t" style="left:549px;top:78px;padding:0 9px 0 8px;background:#f0f0f0;font-size:12px;color:#101010"><i style="width:12px">描</i><i style="width:12px">边</i></div>
<div class="a" style="left:533px;top:182px;width:250px;height:42px;background:transparent;border:1px solid #bcbcbc;box-shadow:inset 1px 1px 0 #ffffff,1px 1px 0 #ffffff"></div>
<div class="t" style="left:549px;top:176px;padding:0 9px 0 8px;background:#f0f0f0;font-size:12px;color:#101010"><i style="width:12px">位</i><i style="width:12px">置</i></div>
<div class="a" style="left:533px;top:241px;width:250px;height:98px;background:transparent;border:1px solid #bcbcbc;box-shadow:inset 1px 1px 0 #ffffff,1px 1px 0 #ffffff"></div>
<div class="t" style="left:549px;top:235px;padding:0 9px 0 8px;background:#f0f0f0;font-size:12px;color:#101010"><i style="width:12px">混</i><i style="width:12px">合</i></div>
<div class="t" style="left:575px;top:104px;font-size:12px;color:#101010;"><i style="width:12px">宽</i><i style="width:12px">度</i><u>(W):</u></div>
<div class="a" style="left:631px;top:100px;width:77px;height:20px;background:#ffffff;border:1px solid #e2e3e6"></div>
<div class="a" style="left:635px;top:103px;width:36px;height:14px;background:#3399ff;"></div>
<div class="t" style="left:636px;top:104px;font-size:12px;color:#ffffff;"><u>2 </u><i style="width:12px">像</i><i style="width:12px">素</i></div>
<div class="t" style="left:598px;top:137px;font-size:12px;color:#101010;"><i style="width:12px">颜</i><i style="width:12px">色</i>:</div>
<div class="a" style="left:632px;top:133px;width:74px;height:19px;background:#000000;"></div>
<div class="a" style="left:559px;top:90px;width:172px;height:71px;background:transparent;border:3px solid #e03a3c"></div>
<svg style="left:543px;top:202px" width="14" height="14"><defs><linearGradient id="rg550" x1="0" y1="0" x2="1" y2="1"><stop offset="0" stop-color="#d8d8d8"/><stop offset="1" stop-color="#fafafa"/></linearGradient></defs><circle cx="7" cy="7" r="5.5" fill="url(#rg550)" stroke="#a0a2a4" stroke-width="1"/></svg>
<div class="t" style="left:560px;top:203px;font-size:12px;color:#101010;"><i style="width:12px">内</i><i style="width:12px">部</i><u>(I)</u></div>
<svg style="left:617px;top:202px" width="14" height="14"><defs><linearGradient id="rg624" x1="0" y1="0" x2="1" y2="1"><stop offset="0" stop-color="#d8d8d8"/><stop offset="1" stop-color="#fafafa"/></linearGradient></defs><circle cx="7" cy="7" r="5.5" fill="url(#rg624)" stroke="#a0a2a4" stroke-width="1"/><circle cx="7" cy="7" r="3.2" fill="#1f5d9c"/><circle cx="6.3" cy="6.3" r="1.3" fill="#6aa8e0"/></svg>
<div class="t" style="left:633px;top:203px;font-size:12px;color:#101010;"><i style="width:12px">居</i><i style="width:12px">中</i><u>(C)</u></div>
<svg style="left:694px;top:202px" width="14" height="14"><defs><linearGradient id="rg701" x1="0" y1="0" x2="1" y2="1"><stop offset="0" stop-color="#d8d8d8"/><stop offset="1" stop-color="#fafafa"/></linearGradient></defs><circle cx="7" cy="7" r="5.5" fill="url(#rg701)" stroke="#a0a2a4" stroke-width="1"/></svg>
<div class="t" style="left:710px;top:203px;font-size:12px;color:#101010;"><i style="width:12px">居</i><i style="width:12px">外</i><u>(U)</u></div>
<div class="t" style="left:579px;top:261px;font-size:12px;color:#101010;"><i style="width:12px">模</i><i style="width:12px">式</i><u>(M):</u></div>
<div class="a" style="left:631px;top:256px;width:141px;height:21px;background:#ffffff;border:1px solid #e6e6e8"></div>
<div class="t" style="left:637px;top:261px;font-size:12px;color:#101010;"><i style="width:12px">正</i><i style="width:12px">常</i></div>
<svg style="left:759px;top:264px" width="9" height="5"><path d="M0 0 L8 0 L4 4.5 Z" fill="#101010"/></svg>
<div class="t" style="left:554px;top:291px;font-size:12px;color:#101010;"><i style="width:12px">不</i><i style="width:12px">透</i><i style="width:12px">明</i><i style="width:12px">度</i><u>(O):</u></div>
<div class="a" style="left:631px;top:287px;width:77px;height:20px;background:#ffffff;border:1px solid #e6e6e8"></div>
<div class="t" style="left:636px;top:291px;font-size:12px;color:#101010;">100</div>
<div class="t" style="left:712px;top:290px;font-size:13px;color:#101010;">%</div>
<div class="a" style="left:543px;top:318px;width:13px;height:13px;background:#f4f4f4;border:1px solid #8e8f8f"></div>
<div class="t" style="left:559px;top:318px;font-size:12px;color:#101010;"><i style="width:12px">保</i><i style="width:12px">留</i><i style="width:12px">透</i><i style="width:12px">明</i><i style="width:12px">区</i><i style="width:12px">域</i><u>(P)</u></div>
<div class="a" style="left:799px;top:83px;width:91px;height:18px;border:1px solid #3c7fb1;border-radius:3px;background:linear-gradient(180deg,#eefafe 0,#d8f2fc 45%,#bce6f8 55%,#b0e0f6 100%);box-shadow:inset 0 0 0 2px #7cdcfa"></div>
<div class="t" style="left:832px;top:86px;font-size:12px;color:#101010;"><i style="width:12px">确</i><i style="width:12px">定</i></div>
<div class="a" style="left:799px;top:111px;width:91px;height:18px;border:1px solid #707070;border-radius:3px;background:linear-gradient(180deg,#f2f2f2 0,#ebebeb 45%,#dddddd 55%,#cfcfcf 100%)"></div>
<div class="t" style="left:832px;top:114px;font-size:12px;color:#101010;"><i style="width:12px">取</i><i style="width:12px">消</i></div>
</body></html>
